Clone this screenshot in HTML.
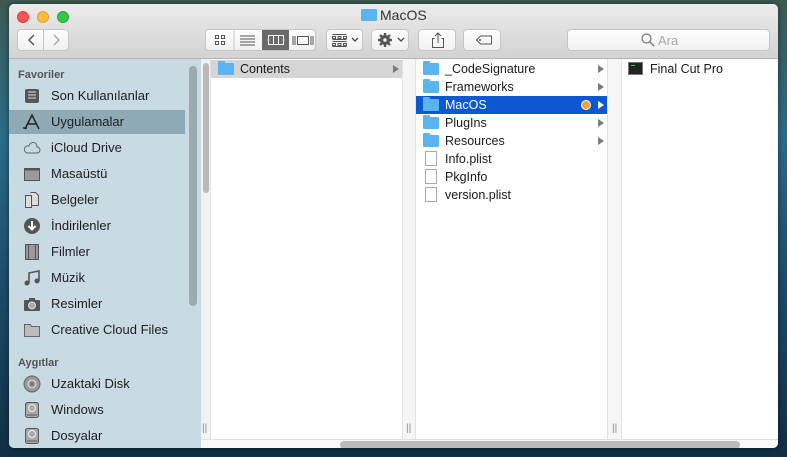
<!DOCTYPE html>
<html><head><meta charset="utf-8"><style>
*{margin:0;padding:0;box-sizing:border-box}
body{width:787px;height:457px;overflow:hidden;position:relative;font-family:"Liberation Sans",sans-serif;font-size:13px;color:#1a1a1a;
background:linear-gradient(180deg,#3d5a52 0%,#2a6c88 30%,#1d4e6c 60%,#0f2f44 100%)}
.win{position:absolute;left:9px;top:4px;width:769px;height:444px;border-radius:5px;overflow:hidden;background:#fff;box-shadow:0 0 6px rgba(0,0,0,.5)}
.tb{position:absolute;left:0;top:0;width:769px;height:55px;background:linear-gradient(#ebebeb,#d3d3d3);border-bottom:1px solid #b4b4b4}
.dot{position:absolute;top:7px;width:12px;height:12px;border-radius:50%}
.btn{position:absolute;top:25px;height:22px;background:linear-gradient(#fdfdfd,#f1f1f1);border:1px solid #c6c6c6;border-radius:4px}
.side{position:absolute;left:0;top:55px;width:192px;height:390px;background:#c9dbe2}
.si{position:absolute;left:14px;font-size:13px;color:#1e1e1e;height:20px;line-height:20px;white-space:nowrap}
.si svg{position:absolute;left:0;top:1px}
.si span{position:absolute;left:28px}
.hd{position:absolute;left:9px;font-size:11px;color:#555;font-weight:bold}
.col{position:absolute;top:55px;height:380px;background:#fff}
.r{position:absolute;height:18px;line-height:18px;font-size:12.5px;white-space:nowrap}
.fi{position:absolute;top:3px;width:16px;height:12px;background:#5ab4ef;border-radius:1px}
.fi:before{content:"";position:absolute;left:0;top:-2px;width:7px;height:3px;background:#5ab4ef;border-radius:1px 1px 0 0}
.ar{position:absolute;width:0;height:0;border-left:6px solid #7a7a7a;border-top:4px solid transparent;border-bottom:4px solid transparent;top:5px}
.doc{position:absolute;top:1px;width:12px;height:15px;border:1px solid #aaa;background:#fff}
</style></head><body>
<div class="win">
 <div class="tb">
  <div class="dot" style="left:8px;background:#fc5753;border:1px solid #df3d39"></div>
  <div class="dot" style="left:28px;background:#fdbc40;border:1px solid #de9f34"></div>
  <div class="dot" style="left:48px;background:#33c748;border:1px solid #27aa35"></div>
  <div style="position:absolute;left:352px;top:5px;width:16px;height:12px;background:#5ab4ef;border-radius:1px"></div>
  <div style="position:absolute;left:371px;top:3px;font-size:14px;color:#333">MacOS</div>
  <div class="btn" style="left:8px;width:52px"><div style="position:absolute;left:25px;top:0;width:1px;height:20px;background:#c6c6c6"></div>
   <svg width="52" height="20" style="position:absolute;left:0;top:0"><path d="M16 5l-5 5 5 5" stroke="#555" stroke-width="1.5" fill="none"/><path d="M36 5l5 5-5 5" stroke="#aaa" stroke-width="1.5" fill="none"/></svg></div>
  <div class="btn" style="left:196px;width:111px;overflow:hidden">
   <div style="position:absolute;left:56px;top:0;width:27px;height:20px;background:#6a6a6a"></div>
   <svg width="111" height="20" style="position:absolute;left:0;top:0">
    <g fill="none" stroke="#555"><rect x="9.5" y="5.5" width="3" height="3"/><rect x="15.5" y="5.5" width="3" height="3"/><rect x="9.5" y="11.5" width="3" height="3"/><rect x="15.5" y="11.5" width="3" height="3"/>
    <path d="M34 6h15M34 9h15M34 12h15M34 15h15"/><line x1="28" y1="0" x2="28" y2="20" stroke="#ccc"/>
    <path d="M87 6v9M89 6v9M107 6v9M105 6v9"/><rect x="91.5" y="6.5" width="11" height="8"/></g>
    <g fill="none" stroke="#fff"><rect x="62.5" y="5.5" width="15" height="9"/><path d="M67.5 5v10M72.5 5v10"/></g>
   </svg></div>
  <div class="btn" style="left:317px;width:37px"><svg width="37" height="20" style="position:absolute;left:0;top:0"><g fill="none" stroke="#555"><path d="M5.5 4.5h14M5.5 9.5h14M5.5 11.5h14M5.5 16.5h14"/><rect x="5.5" y="6.5" width="3" height="2"/><rect x="11" y="6.5" width="3" height="2"/><rect x="16.5" y="6.5" width="3" height="2"/><rect x="5.5" y="13.5" width="3" height="2"/><rect x="11" y="13.5" width="3" height="2"/><rect x="16.5" y="13.5" width="3" height="2"/></g><path d="M25 8l3 3 3-3" stroke="#444" stroke-width="1.3" fill="none"/></svg></div>
  <div class="btn" style="left:362px;width:38px"><svg width="38" height="20" style="position:absolute;left:0;top:0"><circle cx="13" cy="10" r="5" fill="#555"/><g stroke="#555" stroke-width="2.4"><path d="M13 3v14M6 10h14M8 5l10 10M18 5L8 15"/></g><circle cx="13" cy="10" r="1.8" fill="#f4f4f4"/><path d="M26 8l3 3 3-3" stroke="#444" stroke-width="1.3" fill="none"/></svg></div>
  <div class="btn" style="left:409px;width:38px"><svg width="38" height="20" style="position:absolute;left:0;top:0"><g fill="none" stroke="#555"><path d="M15.5 8.5h-2v9h11v-9h-2"/><path d="M19 3v10M16 6l3-3 3 3"/></g></svg></div>
  <div class="btn" style="left:454px;width:38px"><svg width="38" height="20" style="position:absolute;left:0;top:0"><path d="M12.5 10l4-4h11v8h-11z" fill="none" stroke="#555"/><circle cx="16" cy="10" r="1" fill="#555"/></svg></div>
  <div class="btn" style="left:558px;width:203px"><svg width="16" height="16" style="position:absolute;left:72px;top:2px"><circle cx="6.5" cy="6.5" r="4.5" fill="none" stroke="#777" stroke-width="1.2"/><path d="M10 10l4 4" stroke="#777" stroke-width="1.4"/></svg><span style="position:absolute;left:90px;top:3px;color:#a8a8a8;font-size:13px">Ara</span></div>
 </div>
 <div class="side">
  <div class="hd" style="top:10px">Favoriler</div>
  <div style="position:absolute;left:0;top:51px;width:176px;height:24px;background:#8eaab6"></div>
  <div style="position:absolute;left:180px;top:7px;width:8px;height:240px;border-radius:4px;background:#a0a9ad"></div>
  <div class="si" style="top:27px"><svg width="18" height="18"><rect x="2" y="2" width="14" height="14" rx="2" fill="#555"/><path d="M5 5h8M5 8h8M5 11h8" stroke="#ddd"/></svg><span>Son Kullanılanlar</span></div>
  <div class="si" style="top:53px"><svg width="18" height="18"><path d="M2 16L9 2l7 14M4 11h10M0 15h4" stroke="#222" stroke-width="1.5" fill="none"/></svg><span>Uygulamalar</span></div>
  <div class="si" style="top:79px"><svg width="18" height="18"><path d="M4 14h10a3 3 0 0 0 0-6 4 4 0 0 0-8-1 3.5 3.5 0 0 0-2 7z" fill="none" stroke="#666"/></svg><span>iCloud Drive</span></div>
  <div class="si" style="top:105px"><svg width="18" height="18"><rect x="1.5" y="3.5" width="15" height="12" fill="#999" stroke="#555"/><rect x="1.5" y="3.5" width="15" height="2" fill="#555"/></svg><span>Masaüstü</span></div>
  <div class="si" style="top:131px"><svg width="18" height="18"><path d="M2.5 4.5h6v12h-6zM7.5 1.5h5l3 3v10h-7" fill="#ddd" stroke="#555"/></svg><span>Belgeler</span></div>
  <div class="si" style="top:157px"><svg width="18" height="18"><circle cx="9" cy="9" r="8" fill="#555"/><path d="M9 4v8M5.5 9l3.5 3.5L12.5 9" stroke="#fff" stroke-width="2" fill="none"/></svg><span>İndirilenler</span></div>
  <div class="si" style="top:183px"><svg width="18" height="18"><rect x="2.5" y="1.5" width="13" height="15" fill="#999" stroke="#555"/><path d="M5.5 1v16M12.5 1v16" stroke="#555"/></svg><span>Filmler</span></div>
  <div class="si" style="top:209px"><svg width="18" height="18"><path d="M6 14V4l10-2v10" stroke="#555" stroke-width="1.6" fill="none"/><circle cx="4" cy="14" r="2.5" fill="#555"/><circle cx="14" cy="12" r="2.5" fill="#555"/></svg><span>Müzik</span></div>
  <div class="si" style="top:235px"><svg width="18" height="18"><rect x="1" y="5" width="16" height="11" rx="1" fill="#555"/><rect x="6" y="3" width="6" height="3" fill="#555"/><circle cx="9" cy="10.5" r="3.5" fill="#aaa" stroke="#ddd"/></svg><span>Resimler</span></div>
  <div class="si" style="top:261px"><svg width="18" height="18"><path d="M1.5 3.5h6l1 2h8v10h-15z" fill="#bbb" stroke="#666"/></svg><span>Creative Cloud Files</span></div>
  <div class="hd" style="top:298px">Aygıtlar</div>
  <div class="si" style="top:315px"><svg width="18" height="18"><circle cx="9" cy="9" r="8" fill="#999" stroke="#666"/><circle cx="9" cy="9" r="4" fill="none" stroke="#ddd"/><circle cx="9" cy="9" r="1.5" fill="#666"/></svg><span>Uzaktaki Disk</span></div>
  <div class="si" style="top:341px"><svg width="18" height="18"><rect x="2.5" y="1.5" width="13" height="15" rx="2" fill="#aaa" stroke="#555"/><circle cx="9" cy="7" r="3.5" fill="none" stroke="#eee"/><path d="M4 14h10" stroke="#555"/></svg><span>Windows</span></div>
  <div class="si" style="top:367px"><svg width="18" height="18"><rect x="2.5" y="1.5" width="13" height="15" rx="2" fill="#aaa" stroke="#555"/><circle cx="9" cy="7" r="3.5" fill="none" stroke="#eee"/><path d="M4 14h10" stroke="#555"/></svg><span>Dosyalar</span></div>
 </div>
 <div class="col" style="left:192px;width:10px;background:#f2f2f2;border-right:1px solid #e0e0e0"><div style="position:absolute;left:2px;top:4px;width:6px;height:130px;border-radius:3px;background:#b9b9b9"></div><div style="position:absolute;left:1px;top:364px;color:#888;font-size:10px">||</div></div>
 <div class="col" style="left:202px;width:191px">
  <div class="r" style="left:0;top:1px;width:191px;background:#d5d5d5"><div class="fi" style="left:7px"></div><span style="position:absolute;left:29px">Contents</span><div class="ar" style="left:182px"></div></div>
 </div>
 <div class="col" style="left:393px;width:14px;background:#f6f6f6;border-left:1px solid #e2e2e2;border-right:1px solid #e2e2e2"><div style="position:absolute;left:3px;top:364px;color:#888;font-size:10px">||</div></div>
 <div class="col" style="left:407px;width:191px">
  <div class="r" style="left:0;top:1px;width:191px"><div class="fi" style="left:7px"></div><span style="position:absolute;left:29px">_CodeSignature</span><div class="ar" style="left:182px"></div></div>
  <div class="r" style="left:0;top:19px;width:191px"><div class="fi" style="left:7px"></div><span style="position:absolute;left:29px">Frameworks</span><div class="ar" style="left:182px"></div></div>
  <div class="r" style="left:0;top:37px;width:191px;background:#0b58d2;color:#fff"><div class="fi" style="left:7px"></div><span style="position:absolute;left:29px">MacOS</span><div style="position:absolute;left:165px;top:4px;width:10px;height:10px;border-radius:50%;background:#f7a131;border:1px solid #fff"></div><div class="ar" style="left:182px;border-left-color:#fff"></div></div>
  <div class="r" style="left:0;top:55px;width:191px"><div class="fi" style="left:7px"></div><span style="position:absolute;left:29px">PlugIns</span><div class="ar" style="left:182px"></div></div>
  <div class="r" style="left:0;top:73px;width:191px"><div class="fi" style="left:7px"></div><span style="position:absolute;left:29px">Resources</span><div class="ar" style="left:182px"></div></div>
  <div class="r" style="left:0;top:91px;width:191px"><div class="doc" style="left:9px"></div><span style="position:absolute;left:29px">Info.plist</span></div>
  <div class="r" style="left:0;top:109px;width:191px"><div class="doc" style="left:9px"></div><span style="position:absolute;left:29px">PkgInfo</span></div>
  <div class="r" style="left:0;top:127px;width:191px"><div class="doc" style="left:9px"></div><span style="position:absolute;left:29px">version.plist</span></div>
 </div>
 <div class="col" style="left:598px;width:15px;background:#f6f6f6;border-left:1px solid #e2e2e2;border-right:1px solid #e2e2e2"><div style="position:absolute;left:4px;top:364px;color:#888;font-size:10px">||</div></div>
 <div class="col" style="left:613px;width:156px">
  <div class="r" style="left:0;top:1px"><div style="position:absolute;left:6px;top:2px;width:15px;height:13px;background:#222;border:1px solid #777"><div style="position:absolute;left:2px;top:2px;width:4px;height:1px;background:#3c3"></div></div><span style="position:absolute;left:28px">Final Cut Pro</span></div>
 </div>
 <div style="position:absolute;left:192px;top:435px;width:577px;height:10px;background:#f9f9f9;border-top:1px solid #e0e0e0"><div style="position:absolute;left:139px;top:1px;width:400px;height:8px;border-radius:4px;background:#bbb"></div></div>
</div>
</body></html>
